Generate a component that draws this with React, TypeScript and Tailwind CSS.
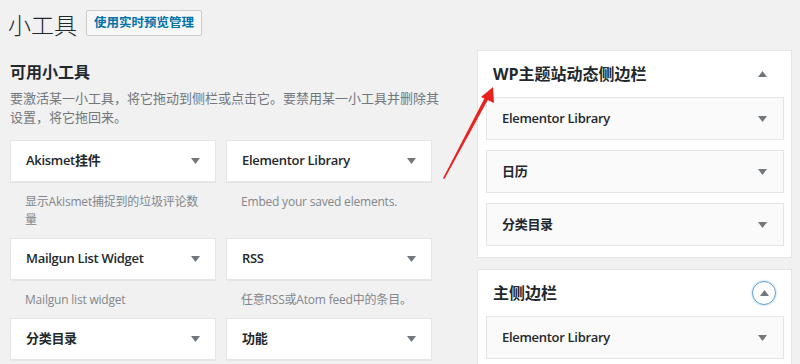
import React from "react";

const FONT = { fontFamily: '"Open Sans", "Noto Sans CJK SC", sans-serif' };

function Down({ className = "" }: { className?: string }) {
  return (
    <svg width="9" height="6" viewBox="0 0 9 6" className={className}>
      <path d="M0 0 L9 0 L4.5 6 Z" fill="#72777c" />
    </svg>
  );
}

function Up({ className = "" }: { className?: string }) {
  return (
    <svg width="9" height="6" viewBox="0 0 9 6" className={className}>
      <path d="M0 6 L9 6 L4.5 0 Z" fill="#72777c" />
    </svg>
  );
}

function Card({ title }: { title: string }) {
  return (
    <div className="h-[42px] bg-white border border-[#e5e5e5] shadow-[0_1px_1px_rgba(0,0,0,0.04)] flex items-center justify-between pl-[15px] pr-[15px]">
      <span className="text-[13px] font-semibold tracking-[-0.3px] text-[#23282d]">{title}</span>
      <Down />
    </div>
  );
}

function Widget({ title, desc }: { title: string; desc: string }) {
  return (
    <div>
      <Card title={title} />
      <div className="pt-[11px] pb-[9px] pl-[15px] pr-[10px] text-[12px] leading-[18px] text-[#82878c] tracking-[-0.2px]">
        {desc}
      </div>
    </div>
  );
}

function InnerWidget({ title }: { title: string }) {
  return (
    <div className="h-[43px] bg-[#fafafa] border border-[#e5e5e5] flex items-center justify-between pl-[15px] pr-[16px]">
      <span className="text-[13px] font-semibold tracking-[-0.3px] text-[#23282d]">{title}</span>
      <Down />
    </div>
  );
}

export default function App() {
  return (
    <div
      className="relative w-[800px] h-[364px] overflow-hidden bg-[#f1f1f1] text-[#23282d]"
      style={FONT}
    >
      <div className="flex pl-[10px]">
        {/* left */}
        <div className="w-[440px] shrink-0">
          <div className="mt-[10px] h-[26px] flex items-center">
            <h1 className="text-[23px] font-light leading-[26px] ml-[-2px] mt-[3px] text-[#23282d]">小工具</h1>
            <button className="ml-[9px] h-[26px] px-[7px] bg-[#f7f7f7] border border-[#cccccc] rounded-[2px] text-[12.5px] font-semibold text-[#0073aa] leading-[24px]">
              使用实时预览管理
            </button>
          </div>
          <h2 className="mt-[24px] text-[16px] font-bold leading-[24px]">可用小工具</h2>
          <p className="mt-[5px] text-[13px] leading-[19px] text-[#72777c] w-[432px]">
            要激活某一小工具，将它拖动到侧栏或点击它。要禁用某一小工具并删除其设置，将它拖回来。
          </p>
          <div className="mt-[13px] grid grid-cols-[206px_206px] gap-x-[10px] items-start">
            <Widget title="Akismet挂件" desc="显示Akismet捕捉到的垃圾评论数量" />
            <Widget title="Elementor Library" desc="Embed your saved elements." />
            <Widget title="Mailgun List Widget" desc="Mailgun list widget" />
            <Widget title="RSS" desc="任意RSS或Atom feed中的条目。" />
            <Widget title="分类目录" desc="" />
            <Widget title="功能" desc="" />
          </div>
        </div>

        {/* right */}
        <div className="ml-[27px] w-[315px] shrink-0 pt-[50px] flex flex-col gap-[11px]">
          <div className="bg-white border border-[#e5e5e5] pb-[11px]">
            <div className="h-[46px] flex items-center justify-between pl-[15px] pr-[24px]">
              <span className="text-[16px] font-bold">WP主题站动态侧边栏</span>
              <Up />
            </div>
            <div className="ml-[8px] mr-[7px] flex flex-col gap-[10px]">
              <InnerWidget title="Elementor Library" />
              <InnerWidget title="日历" />
              <InnerWidget title="分类目录" />
            </div>
          </div>
          <div className="bg-white border border-[#e5e5e5] pb-[11px]">
            <div className="h-[46px] flex items-center justify-between pl-[15px] pr-[15px]">
              <span className="text-[16px] font-bold">主侧边栏</span>
              <span className="w-[24px] h-[24px] rounded-full border border-[#5b9dd9] shadow-[0_0_2px_rgba(30,140,190,0.5)] flex items-center justify-center">
                <Up />
              </span>
            </div>
            <div className="ml-[8px] mr-[7px] flex flex-col gap-[10px]">
              <InnerWidget title="Elementor Library" />
            </div>
          </div>
        </div>
      </div>

      {/* red arrow annotation */}
      <svg className="absolute left-0 top-0 pointer-events-none" width="800" height="364">
        <path d="M444 178 L489 96 L487 95 Z" fill="#e8231f" stroke="#e8231f" strokeWidth="1.6" strokeLinejoin="round" />
        <path d="M493 87 L481 97 L494 103 Z" fill="#e8231f" />
      </svg>
    </div>
  );
}
